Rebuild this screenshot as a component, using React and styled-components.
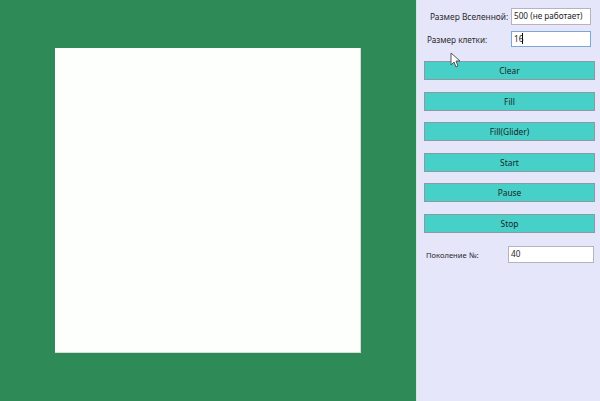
import React from "react";
import styled, { createGlobalStyle } from "styled-components";

const Global = createGlobalStyle`
  html, body { margin: 0; padding: 0; }
  body { font-family: "Noto Sans", "Open Sans", sans-serif; background: #e6e6fa; }
  #root { width: 600px; height: 401px; overflow: hidden; }
`;

const Window = styled.div`
  position: relative;
  display: flex;
  width: 600px;
  height: 401px;
`;

const Field = styled.div`
  width: 417px;
  height: 401px;
  background: #2e8b57;
  padding: 48px 0 0 55px;
  box-sizing: border-box;
  border-right: 1px solid #cfe9d9;
`;

const Canvas = styled.div`
  width: 306px;
  height: 305px;
  background: #fdfffd;
  box-sizing: border-box;
  border-right: 1px solid #d8dcd8;
  border-bottom: 1px solid #d8dcd8;
`;

const Panel = styled.div`
  flex: 1;
  background: #e6e6fa;
  display: flex;
  flex-direction: column;
  padding: 8px 5px 0 7px;
  box-sizing: border-box;
`;

const Row = styled.div`
  display: flex;
  align-items: center;
  height: ${(p) => p.$h}px;
  margin-top: ${(p) => p.$mt || 0}px;
`;

const Label = styled.span`
  width: ${(p) => p.$w}px;
  padding-left: ${(p) => p.$pl}px;
  box-sizing: border-box;
  font-size: ${(p) => p.$fs || 8.2}px;
  color: #2a2a2a;
  white-space: nowrap;
`;

const Input = styled.div`
  width: ${(p) => p.$w}px;
  height: 100%;
  box-sizing: border-box;
  background: #ffffff;
  border: 1px solid ${(p) => (p.$focus ? "#7aa7d8" : "#b4b4c0")};
  font-size: 8.2px;
  color: #1e1e1e;
  padding: 1px 2px;
  line-height: 11px;
  display: flex;
  align-items: flex-start;
  white-space: nowrap;
  overflow: hidden;
`;

const Caret = styled.span`
  display: inline-block;
  width: 1px;
  height: 11px;
  background: #111;
  margin-left: -1px;
`;

const Button = styled.div`
  width: 171px;
  height: 19px;
  margin-top: ${(p) => p.$mt}px;
  box-sizing: border-box;
  background: #46d0c8;
  border: 1px solid #8a9aa0;
  display: flex;
  align-items: center;
  justify-content: center;
  font-size: 8.4px;
  color: #1a2626;
`;

const Cursor = styled.svg`
  position: absolute;
  left: 450px;
  top: 52px;
`;

export default function App() {
  const buttons = [
    ["Clear", 14],
    ["Fill", 12],
    ["Fill(Glider)", 11],
    ["Start", 12],
    ["Pause", 11],
    ["Stop", 12],
  ];
  return (
    <>
      <Global />
      <Window>
        <Field>
          <Canvas />
        </Field>
        <Panel>
          <Row $h={17}>
            <Label $w={87} $pl={6} $fs={8.4}>Размер Вселенной:</Label>
            <Input $w={80}>500 (не работает)</Input>
          </Row>
          <Row $h={16} $mt={6}>
            <Label $w={87} $pl={3}>Размер клетки:</Label>
            <Input $w={80} $focus>
              16<Caret />
            </Input>
          </Row>
          {buttons.map(([t, mt]) => (
            <Button key={t} $mt={mt}>{t}</Button>
          ))}
          <Row $h={17} $mt={13}>
            <Label $w={84} $pl={2} $fs={7.6}>Поколение №:</Label>
            <Input $w={86}>40</Input>
          </Row>
        </Panel>
        <Cursor width="10" height="16" viewBox="0 0 10 16">
          <path d="M1 1 L1 13 L4 10 L6 15 L8 14 L6 9 L10 9 Z" fill="#fff" stroke="#555" strokeWidth="1" />
        </Cursor>
      </Window>
    </>
  );
}
